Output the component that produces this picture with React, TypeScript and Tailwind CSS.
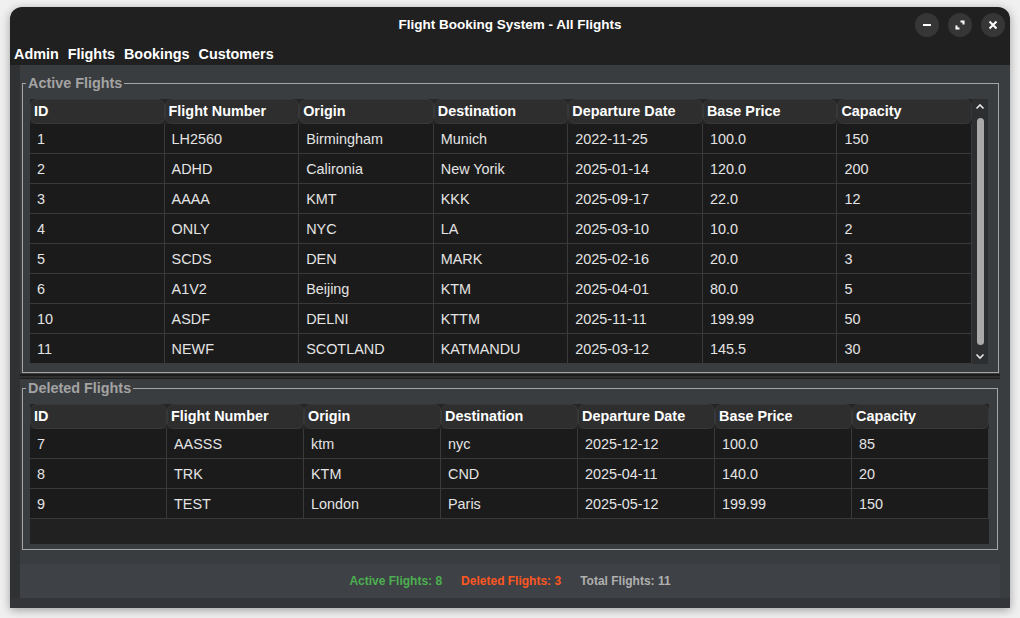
import React from "react";

type Row = string[];

const headers = ["ID", "Flight Number", "Origin", "Destination", "Departure Date", "Base Price", "Capacity"];

const activeRows: Row[] = [
    ["1", "LH2560", "Birmingham", "Munich", "2022-11-25", "100.0", "150"],
    ["2", "ADHD", "Calironia", "New Yorik", "2025-01-14", "120.0", "200"],
    ["3", "AAAA", "KMT", "KKK", "2025-09-17", "22.0", "12"],
    ["4", "ONLY", "NYC", "LA", "2025-03-10", "10.0", "2"],
    ["5", "SCDS", "DEN", "MARK", "2025-02-16", "20.0", "3"],
    ["6", "A1V2", "Beijing", "KTM", "2025-04-01", "80.0", "5"],
    ["10", "ASDF", "DELNI", "KTTM", "2025-11-11", "199.99", "50"],
    ["11", "NEWF", "SCOTLAND", "KATMANDU", "2025-03-12", "145.5", "30"],
];

const deletedRows: Row[] = [
    ["7", "AASSS", "ktm", "nyc", "2025-12-12", "100.0", "85"],
    ["8", "TRK", "KTM", "CND", "2025-04-11", "140.0", "20"],
    ["9", "TEST", "London", "Paris", "2025-05-12", "199.99", "150"],
];

const HeaderRow = () => (
    <div className="flex h-[25px] bg-[#262626]">
        {headers.map((h) => (
            <div key={h} className="flex-1 min-w-0 flex items-center pl-[3px] rounded-[7px] border border-[#383838] bg-[#2e2e2e] text-[14.4px] font-bold text-white whitespace-nowrap">
                {h}
            </div>
        ))}
    </div>
);

const DataRow = ({ row }: { row: Row }) => (
    <div className="flex h-[30px] border-b border-[#3a3a3a] bg-[#1b1b1b]">
        {row.map((c, i) => (
            <div key={i} className="flex-1 min-w-0 flex items-center pl-[7px] pt-[2px] border-r border-[#3a3a3a] text-[14.4px] text-[#e4e4e4] whitespace-nowrap">
                {c}
            </div>
        ))}
    </div>
);

const Chevron = ({ up }: { up?: boolean }) => (
    <svg width="10" height="7" viewBox="0 0 10 7" className="block">
        <polyline points={up ? "1.5,5.5 5,2 8.5,5.5" : "1.5,1.5 5,5 8.5,1.5"} fill="none" stroke="#e6e6e6" strokeWidth="1.6" />
    </svg>
);

const Panel = ({ title, width, children, className }: { title: string; width: string; children: React.ReactNode; className: string }) => (
    <fieldset className={`ml-[2px] border border-[#a6a6a6] ${width}`}>
        <legend className="ml-[3px] px-[2px] text-[14.4px] leading-[16px] font-bold text-[#a3a3a3]">{title}</legend>
        <div className={className}>{children}</div>
    </fieldset>
);

export default function App() {
    return (
        <div className="w-[1020px] h-[618px] bg-[#f0f0f0] pt-[7px] pl-[10px] font-['Liberation_Sans',Arial,sans-serif]">
            <div className="w-[1000px] h-[601px] flex flex-col rounded-t-[12px] overflow-hidden shadow-[0_2px_10px_rgba(0,0,0,0.35)] bg-[#202020]">
                {/* title bar */}
                <div className="relative h-[36px] flex items-center justify-center">
                    <span className="text-[13.5px] font-bold text-white">Flight Booking System - All Flights</span>
                    <div className="absolute right-[5px] top-[6px] flex gap-[9px]">
                        <div className="w-[24px] h-[24px] rounded-full bg-[#363636] flex items-center justify-center">
                            <div className="w-[8px] h-[2px] bg-white" />
                        </div>
                        <div className="w-[24px] h-[24px] rounded-full bg-[#363636] flex items-center justify-center">
                            <svg width="10" height="10" viewBox="0 0 10 10">
                                <path d="M5.5 1.5h3v3M1.5 5.5v3h3" fill="none" stroke="#fff" strokeWidth="2" />
                            </svg>
                        </div>
                        <div className="w-[24px] h-[24px] rounded-full bg-[#363636] flex items-center justify-center">
                            <svg width="10" height="10" viewBox="0 0 10 10">
                                <path d="M1.5 1.5l7 7M8.5 1.5l-7 7" fill="none" stroke="#fff" strokeWidth="2" />
                            </svg>
                        </div>
                    </div>
                </div>
                {/* menu bar */}
                <div className="h-[22px] flex items-center gap-[9px] pl-[4px] pt-[2px] text-[14.4px] font-bold text-white">
                    <span>Admin</span>
                    <span>Flights</span>
                    <span>Bookings</span>
                    <span>Customers</span>
                </div>
                {/* body */}
                <div className="flex-1 flex flex-col bg-[#3a3d40]">
                    <div className="flex-1 flex">
                        <div className="w-[10px] bg-[#2f3133]" />
                        <div className="w-[980px] flex flex-col pt-[10px]">
                            <Panel title="Active Flights" width="w-[977px]" className="pt-[8px] pl-[7px] pr-[10px] pb-[8px]">
                                <div className="flex">
                                    <div className="w-[942px] flex flex-col">
                                        <HeaderRow />
                                        {activeRows.map((r) => (
                                            <DataRow key={r[0]} row={r} />
                                        ))}
                                    </div>
                                    <div className="w-[16px] bg-[#2c2e30] flex flex-col items-center pt-[4px] pb-[4px]">
                                        <Chevron up />
                                        <div className="mt-[8px] w-[7px] h-[227px] rounded-full bg-[#a9a9a9]" />
                                        <div className="mt-[8px]">
                                            <Chevron />
                                        </div>
                                    </div>
                                </div>
                            </Panel>
                            {/* splitter */}
                            <div className="h-[7px] flex flex-col">
                                <div className="h-[1px]" />
                                <div className="h-[2px] bg-[#1c1c1c]" />
                                <div className="h-[2px] bg-[#2f2f2f]" />
                                <div className="h-[1px] bg-[#1c1c1c]" />
                            </div>
                            <Panel title="Deleted Flights" width="w-[976px]" className="pt-[8px] pl-[7px] pr-[8px] pb-[5px]">
                                <div className="w-[959px] flex flex-col">
                                    <HeaderRow />
                                    <div className="h-[115px] bg-[#212121] flex flex-col">
                                        {deletedRows.map((r) => (
                                            <DataRow key={r[0]} row={r} />
                                        ))}
                                    </div>
                                </div>
                            </Panel>
                            {/* status bar */}
                            <div className="mt-[14px] h-[34px] bg-[#3e4145] flex items-center justify-center gap-[19px] text-[12px] font-bold">
                                <span className="text-[#4caf50]">Active Flights: 8</span>
                                <span className="text-[#ff5722]">Deleted Flights: 3</span>
                                <span className="text-[#b0b0b0]">Total Flights: 11</span>
                            </div>
                        </div>
                    </div>
                    <div className="h-[10px] bg-[#333538]" />
                </div>
            </div>
        </div>
    );
}
